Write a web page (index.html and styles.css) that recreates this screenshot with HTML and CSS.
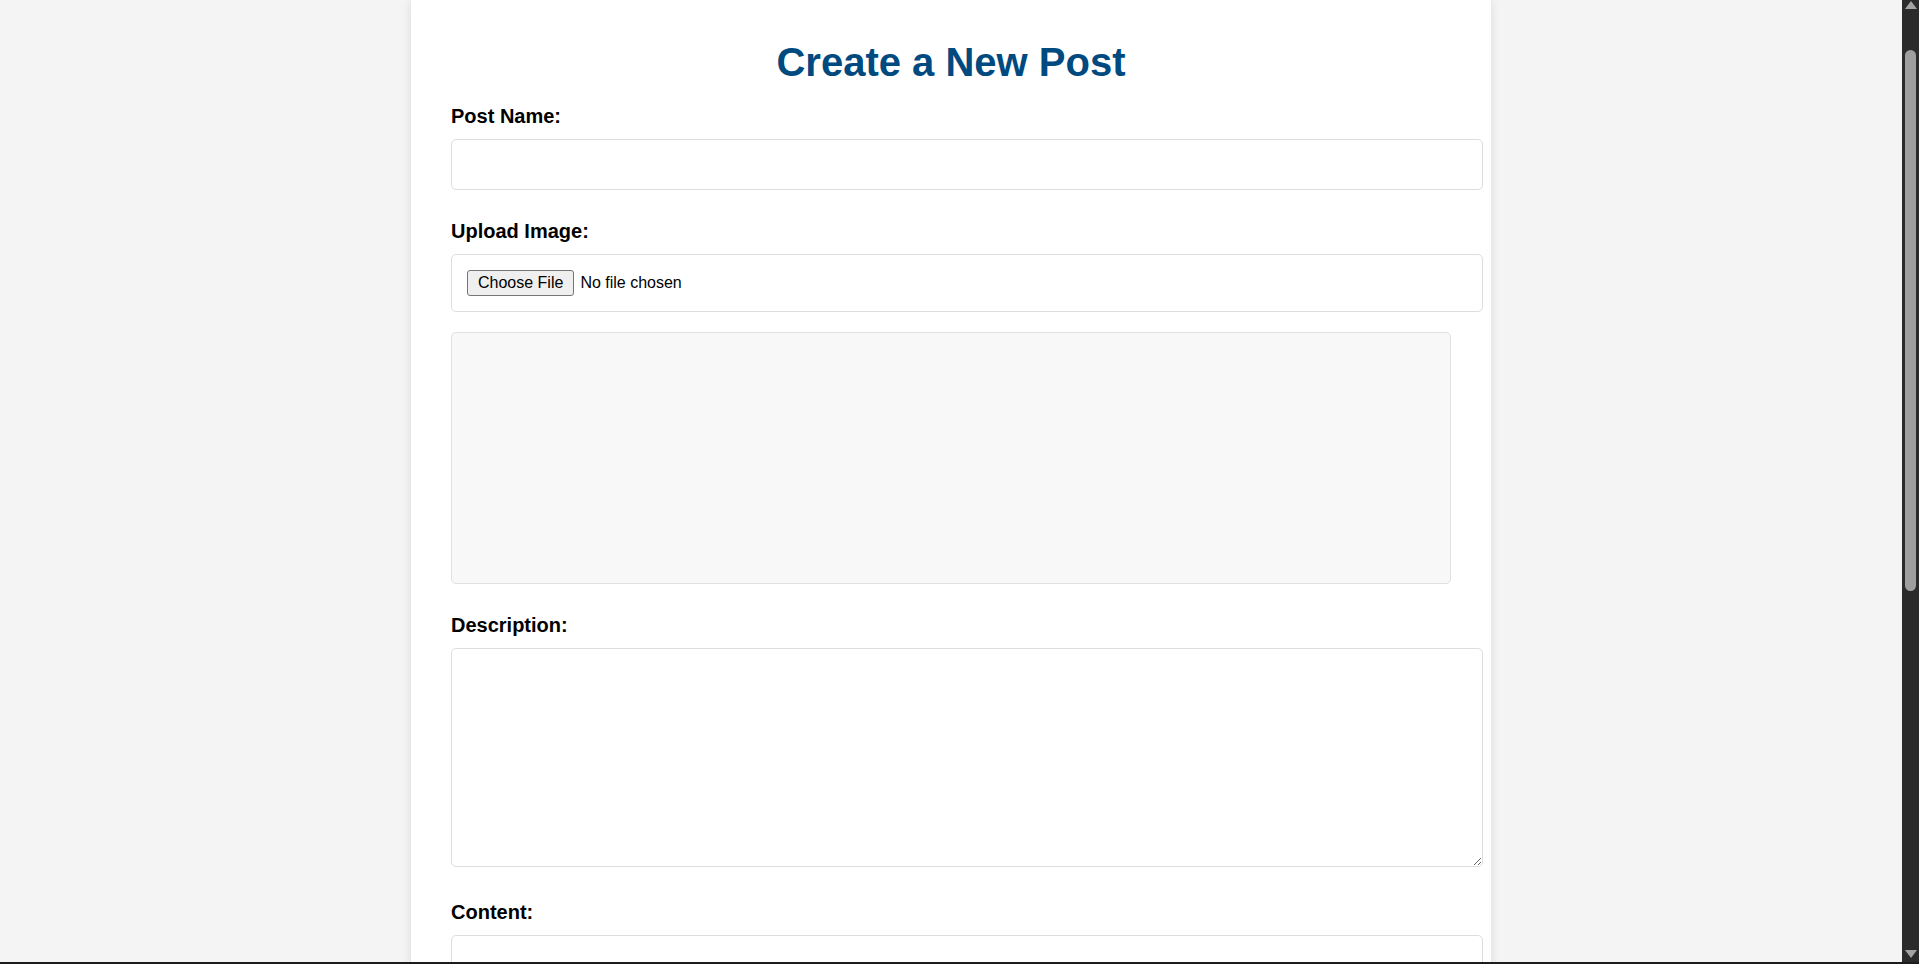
FILE: index.html
```html
<!DOCTYPE html>
<html lang="en">
<head>
<meta charset="utf-8">
<title>Create a New Post</title>
<link rel="stylesheet" href="styles.css">
</head>
<body>
<div class="container">
  <h1 class="title">Create a New Post</h1>
  <form class="post-form">
    <div class="form-group">
      <label for="postName" class="field-label">Post Name:</label>
      <input type="text" id="postName" class="field text-field">
    </div>
    <div class="form-group">
      <label for="postImage" class="field-label">Upload Image:</label>
      <input type="file" id="postImage" class="field file-field">
      <div class="image-preview"></div>
    </div>
    <div class="form-group">
      <label for="postDescription" class="field-label">Description:</label>
      <textarea id="postDescription" class="field textarea-field"></textarea>
    </div>
    <div class="form-group">
      <label for="postContent" class="field-label">Content:</label>
      <textarea id="postContent" class="field textarea-field content-field"></textarea>
    </div>
  </form>
</div>
<div class="scrollbar" aria-hidden="true">
  <div class="sb-btn sb-up"><span class="sb-arrow-up"></span></div>
  <div class="sb-track"><div class="sb-thumb"></div></div>
  <div class="sb-btn sb-down"><span class="sb-arrow-down"></span></div>
</div>
<div class="window-edge" aria-hidden="true"></div>
</body>
</html>
```

FILE: styles.css
```css
html, body {
  margin: 0;
  padding: 0;
}

html {
  scrollbar-width: none;
}

body {
  padding-right: 17px;
  background: #f4f4f4;
  font-family: "Liberation Sans", Arial, sans-serif;
  font-size: 16px;
  color: #000;
}

.container {
  max-width: 1000px;
  margin: 0 auto;
  padding: 40px 40px 60px;
  background: #fff;
  box-shadow: 0 0 10px rgba(0, 0, 0, 0.1);
}

.title {
  margin: 0 0 20px;
  font-size: 40px;
  font-weight: bold;
  text-align: center;
  color: #004a80;
}

.form-group {
  margin-bottom: 30px;
}

.field-label {
  display: block;
  margin-bottom: 11px;
  font-size: 20px;
  font-weight: bold;
}

.field {
  box-sizing: content-box;
  width: 100%;
  padding: 15px;
  border: 1px solid #dddddd;
  border-radius: 5px;
  background: #fff;
  font-family: "Liberation Sans", Arial, sans-serif;
  font-size: 16px;
  color: #000;
  margin: 0;
}

.text-field {
  height: 19px;
}

.file-field::file-selector-button {
  margin: 0 6px 0 0;
  padding: 3px 10px;
  border: 1px solid #767676;
  border-radius: 3px;
  background: #efefef;
  font-family: "Liberation Sans", Arial, sans-serif;
  font-size: 16px;
  color: #000;
}

.image-preview {
  margin-top: 20px;
  height: 250px;
  border: 1px solid #e0e0e0;
  border-radius: 5px;
  background: #f8f8f8;
}

.textarea-field {
  height: 187px;
}

.content-field {
  height: 320px;
}

/* emulated browser scrollbar (window chrome) */
.scrollbar {
  position: fixed;
  top: 0;
  right: 0;
  bottom: 2px;
  width: 17px;
  display: flex;
  flex-direction: column;
  background: #2b2b2b;
}

.sb-btn {
  height: 17px;
  flex: 0 0 17px;
  display: flex;
  justify-content: center;
}

.sb-up {
  align-items: flex-start;
  padding-top: 1px;
  box-sizing: border-box;
}

.sb-down {
  align-items: flex-end;
  padding-bottom: 4px;
  box-sizing: border-box;
}

.sb-arrow-up {
  width: 0;
  height: 0;
  border-left: 6px solid transparent;
  border-right: 6px solid transparent;
  border-bottom: 8px solid #a3a3a3;
}

.sb-arrow-down {
  width: 0;
  height: 0;
  border-left: 6px solid transparent;
  border-right: 6px solid transparent;
  border-top: 8px solid #a3a3a3;
}

.sb-track {
  flex: 1;
  padding-top: 33px;
}

.sb-thumb {
  width: 11px;
  height: 541px;
  margin: 0 auto;
  border-radius: 6px;
  background: #9f9f9f;
}

.window-edge {
  position: fixed;
  left: 0;
  right: 0;
  bottom: 0;
  height: 2px;
  background: #1c1c1c;
}
```
